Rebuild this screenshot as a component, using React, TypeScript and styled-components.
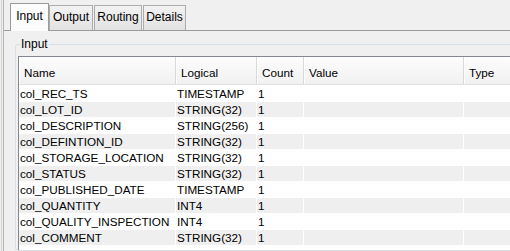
import React from "react";
import styled, { createGlobalStyle } from "styled-components";

const Global = createGlobalStyle`
  html, body { margin: 0; padding: 0; background: #f0f0f0; }
  body { font-family: "Liberation Sans", Arial, sans-serif; font-size: 11.7px; color: #000; }
`;

const Page = styled.div`
  width: 510px;
  height: 251px;
  overflow: hidden;
  background: #f0f0f0;
  display: flex;
`;

const EdgeOuter = styled.div`
  margin-left: 1px;
  border-left: 1px solid #d2d2d2;
  display: flex;
  flex: none;
`;

const EdgeInner = styled.div`
  margin-left: 1px;
  border-left: 1px solid #b6b6b6;
  width: 560px;
  display: flex;
  flex-direction: column;
`;

const TabStrip = styled.div`
  display: flex;
  align-items: flex-end;
  height: 30px;
  padding-left: 6px;
  flex: none;
`;

const Tab = styled.div<{ $w: number; $active?: boolean; $gap?: number }>`
  box-sizing: border-box;
  width: ${(p) => p.$w}px;
  margin-left: ${(p) => p.$gap ?? 0}px;
  height: ${(p) => (p.$active ? 28 : 25)}px;
  margin-bottom: ${(p) => (p.$active ? -1 : 0)}px;
  padding-top: ${(p) => (p.$active ? 5 : 4)}px;
  border: 1px solid ${(p) => (p.$active ? "#9a9a9a" : "#acacac")};
  border-bottom: none;
  background: ${(p) =>
    p.$active ? "#fcfcfc" : "linear-gradient(#f2f2f2, #e2e2e2)"};
  display: flex;
  justify-content: center;
  align-items: flex-start;
  line-height: 15px;
  font-size: 12px;
  white-space: nowrap;
  position: relative;
  z-index: ${(p) => (p.$active ? 1 : 0)};
`;

const Pane = styled.div`
  flex: 1;
  border-top: 1px solid #9c9c9c;
  padding: 6px 0 0 11px;
  display: flex;
  flex-direction: column;
  min-height: 0;
`;

const Group = styled.fieldset`
  margin: 0;
  padding: 5px 0 0 2px;
  border: 1px solid #d5dfe5;
  border-radius: 3px;
  min-width: 0;
  flex: 1;
  display: flex;
  flex-direction: column;
`;

const Legend = styled.legend`
  padding: 0 1px;
  margin-left: 2px;
  line-height: 14px;
  font-size: 12px;
`;

const Table = styled.div`
  flex: 1;
  background: #fff;
  border-left: 1px solid #828790;
  border-top: 1px solid #828790;
  display: flex;
  flex-direction: column;
`;

const cols = "156px 80px 46px 159px 1fr";

const HeaderRow = styled.div`
  display: grid;
  grid-template-columns: ${cols};
  column-gap: 1px;
  background: #d9d9d9;
  border-bottom: 1px solid #e2e2e2;
`;

const HeaderCell = styled.div`
  height: 27px;
  box-sizing: border-box;
  padding: 8px 0 0 5px;
  line-height: 15px;
  background: linear-gradient(#fdfdfd, #f1f1f1);
  box-shadow: inset 1px 0 0 #ffffff;
  white-space: nowrap;
`;

const Row = styled.div`
  display: grid;
  grid-template-columns: ${cols};
  column-gap: 1px;
  padding-top: 1px;
  background: #fff;
`;

const Cell = styled.div<{ $shade: boolean }>`
  height: 15px;
  line-height: 15px;
  padding-left: 1px;
  background: ${(p) => (p.$shade ? "#efefef" : "#ffffff")};
  white-space: nowrap;
  overflow: visible;
`;

const rows: [string, string, string][] = [
  ["col_REC_TS", "TIMESTAMP", "1"],
  ["col_LOT_ID", "STRING(32)", "1"],
  ["col_DESCRIPTION", "STRING(256)", "1"],
  ["col_DEFINTION_ID", "STRING(32)", "1"],
  ["col_STORAGE_LOCATION", "STRING(32)", "1"],
  ["col_STATUS", "STRING(32)", "1"],
  ["col_PUBLISHED_DATE", "TIMESTAMP", "1"],
  ["col_QUANTITY", "INT4", "1"],
  ["col_QUALITY_INSPECTION", "INT4", "1"],
  ["col_COMMENT", "STRING(32)", "1"],
];

export default function App() {
  return (
    <Page>
      <Global />
      <EdgeOuter>
        <EdgeInner>
          <TabStrip>
            <Tab $w={39} $active>
              Input
            </Tab>
            <Tab $w={44}>Output</Tab>
            <Tab $w={48} $gap={1}>
              Routing
            </Tab>
            <Tab $w={43} $gap={1}>
              Details
            </Tab>
          </TabStrip>
          <Pane>
            <Group>
              <Legend>Input</Legend>
              <Table>
                <HeaderRow>
                  <HeaderCell>Name</HeaderCell>
                  <HeaderCell>Logical</HeaderCell>
                  <HeaderCell>Count</HeaderCell>
                  <HeaderCell>Value</HeaderCell>
                  <HeaderCell>Type</HeaderCell>
                </HeaderRow>
                {rows.map(([n, l, c], i) => {
                  const shade = i % 2 === 1;
                  return (
                    <Row key={n}>
                      <Cell $shade={shade}>{n}</Cell>
                      <Cell $shade={shade}>{l}</Cell>
                      <Cell $shade={shade}>{c}</Cell>
                      <Cell $shade={shade} />
                      <Cell $shade={shade} />
                    </Row>
                  );
                })}
              </Table>
            </Group>
          </Pane>
        </EdgeInner>
      </EdgeOuter>
    </Page>
  );
}
